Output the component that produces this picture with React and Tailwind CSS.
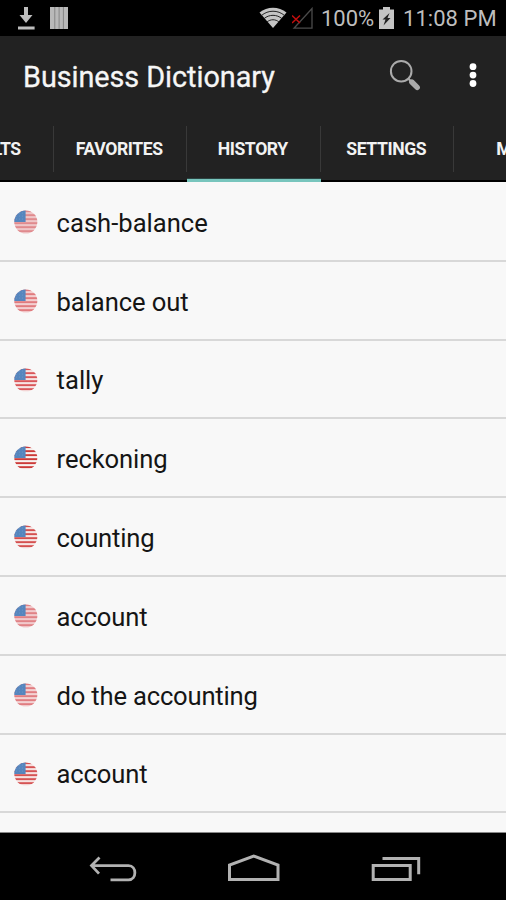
import React from "react";

const rows = [
  { word: "cash-balance", box: "h-[80px] pt-[2px]", tracking: "tracking-normal", stripe: "#e08a8e", gap: "#efc6c8" },
  { word: "balance out", box: "h-[79px] pt-[1px]", tracking: "tracking-[-0.1px]", stripe: "#e07b7e", gap: "#f3cfd0" },
  { word: "tally", box: "h-[78px] pt-[1px]", tracking: "tracking-normal", stripe: "#d9565a", gap: "#f6e4e4" },
  { word: "reckoning", box: "h-[79px] pt-[1px]", tracking: "tracking-[-0.1px]", stripe: "#cc3a38", gap: "#f8f2f0" },
  { word: "counting", box: "h-[79px] pt-[1px]", tracking: "tracking-[-0.2px]", stripe: "#d4504f", gap: "#f6e6e5" },
  { word: "account", box: "h-[79px] pt-[1px]", tracking: "tracking-[-0.15px]", stripe: "#e08286", gap: "#f1cacc" },
  { word: "do the accounting", box: "h-[79px] pt-[1px]", tracking: "tracking-[-0.2px]", stripe: "#e07d81", gap: "#f3d2d3" },
  { word: "account", box: "h-[78px] pt-[1px]", tracking: "tracking-[-0.15px]", stripe: "#d55354", gap: "#f6e2e1" },
];

function Flag({ id, stripe, gap }) {
  const clip = `flag-${id}`;
  return (
    <svg className="ml-[14px] h-6 w-6 shrink-0" viewBox="0 0 24 24">
      <clipPath id={clip}>
        <circle cx="11.8" cy="12" r="11.5" />
      </clipPath>
      <g clipPath={`url(#${clip})`}>
        <rect width="24" height="24" fill={gap} />
        {[0, 4, 8, 12, 16, 20].map((y) => (
          <rect key={y} y={y + 0.2} width="24" height="1.9" fill={stripe} />
        ))}
        <rect width="11.6" height="12" fill="#5686be" />
        <g fill="#7399c9">
          {[3, 6, 9].map((y) =>
            [2.5, 5.5, 8.5].map((x) => <circle key={`${x}-${y}`} cx={x} cy={y} r="0.5" />)
          )}
        </g>
      </g>
    </svg>
  );
}

function StatusBar() {
  return (
    <div className="flex h-9 shrink-0 items-center bg-black text-[22px] leading-none text-[#bebebe]">
      <svg className="ml-[17px] h-6 w-[18px]" viewBox="0 0 18 24" fill="#bebebe">
        <path d="M7 1h4v8h4.5L9 17 2.5 9H7zM1 20.5h16.6v3H1z" />
      </svg>
      <svg className="ml-[15px] h-[22px] w-[18px]" viewBox="0 0 18 22">
        <rect width="18" height="22" fill="#b9b9b9" />
        <path d="M4.8 0v22M9.1 0v22M13.4 0v22" stroke="#858585" strokeWidth="1" />
      </svg>
      <svg className="ml-auto mr-[1px] h-[22px] w-7" viewBox="0 0 28 22">
        <path d="M.5 5.500C8-1 20-1 27.500 5.500L14 21Z" fill="#c4c4c4" />
        <g fill="none" stroke="#222" strokeWidth="1">
          <path d="M2.500 8.500C9 2.800 19 2.800 25.500 8.500M5 11.700c5-4.500 13-4.500 18 0M8 15c3.400-3 8.600-3 12 0" />
        </g>
      </svg>
      <svg className="ml-[4px] h-[22px] w-[23px]" viewBox="0 0 23 22" fill="none">
        <path d="M2 21.200 20 1.500v19.700Z" stroke="#4b4b4b" strokeWidth="1.300" />
        <path d="M0 8.500l8 7.500M8 8.500 0 16" stroke="#c20d0d" strokeWidth="1.500" />
      </svg>
      <span className="ml-[6px] w-[54px] whitespace-nowrap pt-[2px]">100%</span>
      <svg className="ml-[4px] h-6 w-[15px]" viewBox="0 0 15 24">
        <path d="M4 1h7v2.500h4V23H0V3.500h4Z" fill="#c4c4c4" />
        <path d="M10.500 7 3.500 13.500h3L4.500 19.500l7-7.500h-3Z" fill="#222" />
      </svg>
      <span className="ml-[9px] mr-[7px] w-[96px] whitespace-nowrap pt-[2px] tracking-[0.05px]">11:08 PM</span>
    </div>
  );
}

function TitleBar() {
  return (
    <div className="flex h-[81px] shrink-0 items-center">
      <h1 className="ml-[23px] whitespace-nowrap pt-[1px] text-[28.8px] leading-none tracking-[-0.05px] text-[#f6f6f6] [-webkit-text-stroke:0.3px_#f6f6f6]">
        Business Dictionary
      </h1>
      <svg className="ml-auto mt-[-3px] h-8 w-8" viewBox="0 0 32 32" fill="none">
        <circle cx="12.200" cy="12.200" r="10.300" stroke="#ababab" strokeWidth="2" />
        <path d="M19.500 19.800 22 22.500" stroke="#ababab" strokeWidth="2" />
        <path d="m22.800 23 5.400 5.400" stroke="#ababab" strokeWidth="5.400" strokeLinecap="round" />
      </svg>
      <svg className="ml-[48px] mr-[29px] mt-[-3px] h-6 w-2" viewBox="0 0 8 24" fill="#fff">
        <circle cx="4" cy="3.700" r="3.400" />
        <circle cx="4" cy="12.100" r="3.400" />
        <circle cx="4" cy="20.500" r="3.400" />
      </svg>
    </div>
  );
}

function Tab({ label, active }) {
  return (
    <div className="flex w-[133.500px] shrink-0 flex-col">
      <div className="mt-[9px] flex h-[46px] items-center justify-center border-r border-[#393939] pr-[1px] pt-[1px] text-[17.600px] font-bold leading-none tracking-[-0.4px] text-[#f2f2f2]">
        {label}
      </div>
      {active ? (
        <div className="mt-[6px] h-1 border-t border-[#2c4341] bg-[#78c5bd]" />
      ) : (
        <div className="mt-2 h-[2px] bg-black" />
      )}
    </div>
  );
}

function NavBar() {
  return (
    <div className="flex h-[67px] shrink-0 items-center bg-black pt-[4px]">
      <svg className="ml-[88px] h-8 w-[49px]" viewBox="0 0 49 32" fill="none" stroke="#b2b2b2" strokeWidth="2.800">
        <path d="M3 12.600h37.500c8.500 0 8.500 14.200 0 14.200H22.500M11.500 4.500 3.500 12.600l7.500 8" />
      </svg>
      <svg className="ml-[90px] h-8 w-[54px]" viewBox="0 0 54 32" fill="none" stroke="#b2b2b2" strokeWidth="3">
        <path d="M2.500 26.600V12L26.700 3 51 12v14.600Z" />
      </svg>
      <svg className="ml-[90px] h-8 w-[50px]" viewBox="0 0 50 32" fill="none" stroke="#b2b2b2" strokeWidth="3">
        <path d="M2.200 12.600h37v14h-37ZM11.500 5.500h36.200v15.700" />
      </svg>
    </div>
  );
}

export default function App() {
  return (
    <div className="flex h-[900px] w-[506px] flex-col overflow-hidden bg-[#f8f8f8] font-['Roboto','Liberation_Sans',sans-serif]">
      <StatusBar />
      <header className="flex h-[146px] shrink-0 flex-col bg-[#222222]">
        <TitleBar />
        <nav className="-ml-[80px] flex h-[65px]">
          <Tab label="RESULTS" />
          <Tab label="FAVORITES" />
          <Tab label="HISTORY" active />
          <Tab label="SETTINGS" />
          <Tab label="MORE" />
        </nav>
      </header>
      <main className="flex min-h-0 flex-1 flex-col overflow-hidden border-b border-[#888]">
        {rows.map((row, i) => (
          <div
            key={i}
            className={`flex shrink-0 items-center border-b-2 border-[#d8d8d8] text-[25.600px] leading-none text-[#151515] ${row.box}`}
          >
            <Flag id={i} stripe={row.stripe} gap={row.gap} />
            <span className={`ml-[18.600px] whitespace-nowrap pt-[3px] ${row.tracking}`}>{row.word}</span>
          </div>
        ))}
      </main>
      <NavBar />
    </div>
  );
}
